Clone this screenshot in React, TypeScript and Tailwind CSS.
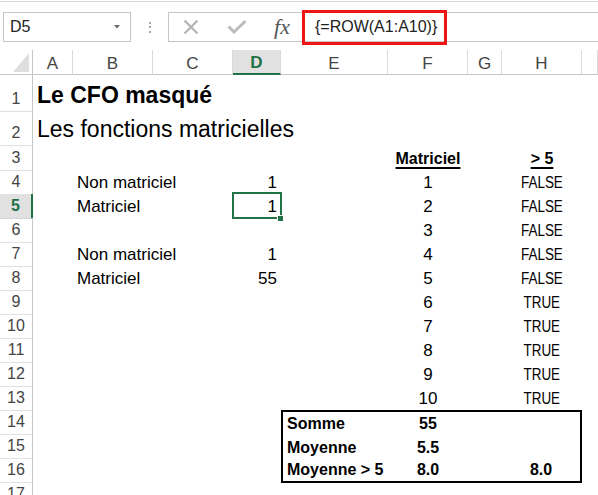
import React from 'react'

type Kind = 'title' | 'subtitle' | 'text' | 'bool' | 'head' | 'sum'

type Cell = {
  text: string
  kind?: Kind
  align?: 'left' | 'center' | 'right'
  edge?: string
}

type SheetRow = {
  n: number
  height: string
  cells: Record<string, Cell>
}

const LETTERS = ['A', 'B', 'C', 'D', 'E', 'F', 'G', 'H', 'I']
const GRID = 'grid grid-cols-[33px_40px_80px_80px_48px_107px_80px_34px_80px_1fr]'

const KIND_CLASS: Record<Kind, string> = {
  title: 'text-[23px] font-bold leading-[28px] pb-[3px]',
  subtitle: 'text-[23px] leading-[28px] pb-[3px]',
  text: 'text-[17px] leading-[24px]',
  // Calibri caps are narrow: squeeze Liberation Sans a little
  bool: 'inline-block origin-center scale-x-[0.84] text-[16px] leading-[24px]',
  head: 'text-[16px] font-bold leading-[24px] underline decoration-[1.5px] underline-offset-[3px]',
  sum: 'text-[16px] font-bold leading-[22px]',
}

const ALIGN_CLASS = {
  left: 'justify-start pl-[4px]',
  center: 'justify-center',
  right: 'justify-end pr-[4px]',
}

const bool = (v: boolean): Cell => ({ text: v ? 'TRUE' : 'FALSE', kind: 'bool', align: 'center' })
const num = (v: number): Cell => ({ text: String(v), align: 'center' })

const sheet: SheetRow[] = [
  { n: 1, height: 'h-[37px]', cells: { A: { text: 'Le CFO masqué', kind: 'title' } } },
  { n: 2, height: 'h-[34px]', cells: { A: { text: 'Les fonctions matricielles', kind: 'subtitle' } } },
  {
    n: 3,
    height: 'h-[24px]',
    cells: {
      F: { text: 'Matriciel', kind: 'head', align: 'center' },
      H: { text: '> 5', kind: 'head', align: 'center' },
    },
  },
  { n: 4, height: 'h-[24px]', cells: { B: { text: 'Non matriciel' }, D: { text: '1', align: 'right' }, F: num(1), H: bool(false) } },
  { n: 5, height: 'h-[24px]', cells: { B: { text: 'Matriciel' }, D: { text: '1', align: 'right' }, F: num(2), H: bool(false) } },
  { n: 6, height: 'h-[24px]', cells: { F: num(3), H: bool(false) } },
  { n: 7, height: 'h-[24px]', cells: { B: { text: 'Non matriciel' }, D: { text: '1', align: 'right' }, F: num(4), H: bool(false) } },
  { n: 8, height: 'h-[24px]', cells: { B: { text: 'Matriciel' }, D: { text: '55', align: 'right' }, F: num(5), H: bool(false) } },
  { n: 9, height: 'h-[24px]', cells: { F: num(6), H: bool(true) } },
  { n: 10, height: 'h-[24px]', cells: { F: num(7), H: bool(true) } },
  { n: 11, height: 'h-[24px]', cells: { F: num(8), H: bool(true) } },
  { n: 12, height: 'h-[24px]', cells: { F: num(9), H: bool(true) } },
  { n: 13, height: 'h-[24px]', cells: { F: num(10), H: bool(true) } },
  {
    n: 14,
    height: 'h-[24px]',
    cells: {
      E: { text: 'Somme', kind: 'sum', align: 'left', edge: 'border-l-2 border-t-2 border-black' },
      F: { text: '55', kind: 'sum', align: 'center', edge: 'border-t-2 border-black' },
      G: { text: '', edge: 'border-t-2 border-black' },
      H: { text: '', edge: 'border-t-2 border-r-2 border-black' },
    },
  },
  {
    n: 15,
    height: 'h-[24px]',
    cells: {
      E: { text: 'Moyenne', kind: 'sum', align: 'left', edge: 'border-l-2 border-black' },
      F: { text: '5.5', kind: 'sum', align: 'center' },
      H: { text: '', edge: 'border-r-2 border-black' },
    },
  },
  {
    n: 16,
    height: 'h-[24px]',
    cells: {
      E: { text: 'Moyenne > 5', kind: 'sum', align: 'left', edge: 'border-l-2 border-b-2 border-black' },
      F: { text: '8.0', kind: 'sum', align: 'center', edge: 'border-b-2 border-black' },
      G: { text: '', edge: 'border-b-2 border-black' },
      H: { text: '8.0', kind: 'sum', align: 'center', edge: 'border-b-2 border-r-2 border-black' },
    },
  },
  { n: 17, height: 'h-[24px]', cells: {} },
]

function FormulaBar() {
  return (
    <div className="mt-px flex h-[49px] items-start border-t border-[#d5d5d5] pt-[10px]">
      <div className="ml-[3px] flex h-[30px] w-[128px] items-center justify-between border border-[#c6c6c6] pl-[6px] pr-[10px]">
        <span className="text-[16px] text-[#222]">D5</span>
        <svg width="6" height="4" viewBox="0 0 6 4">
          <path d="M0 0h6L3 3.5z" fill="#6a6a6a" />
        </svg>
      </div>
      <div className="flex h-[30px] w-[37px] flex-col items-center justify-center gap-[2.5px]">
        <span className="size-[2px] bg-[#a8a8a8]" />
        <span className="size-[2px] bg-[#a8a8a8]" />
        <span className="size-[2px] bg-[#a8a8a8]" />
      </div>
      <div className="flex h-[30px] flex-1 items-center border border-r-0 border-[#c6c6c6]">
        <div className="flex w-[44px] justify-center">
          <svg width="16" height="16" viewBox="0 0 16 16">
            <path d="M1.5 1.5L14.5 14.5M14.5 1.5L1.5 14.5" stroke="#b4b4b4" strokeWidth="2.2" />
          </svg>
        </div>
        <div className="flex w-[47px] justify-center">
          <svg width="20" height="16" viewBox="0 0 20 16">
            <path d="M1.5 7.5L7 13L18.5 2" stroke="#bcbcbc" strokeWidth="3" fill="none" />
          </svg>
        </div>
        <div className="flex w-[44px] justify-center">
          <span className="font-['Liberation_Serif',serif] text-[22px] italic leading-none text-[#555]">fx</span>
        </div>
        <div className="-ml-[2px] flex h-[35px] w-[145px] items-center border-[3px] border-[#ee1515] pl-[10px]">
          <span className="text-[16px] text-[#222]">{'{=ROW(A1:A10)}'}</span>
        </div>
      </div>
    </div>
  )
}

function ColumnHeaders() {
  return (
    <div className={`${GRID} h-[25px]`}>
      <div className="flex items-end justify-end border-b border-r border-[#c6c6c6] pb-[2px] pr-[3px]">
        <svg width="16" height="19" viewBox="0 0 16 19">
          <path d="M16 0V19H0Z" fill="#dfdfdf" />
        </svg>
      </div>
      {LETTERS.map((l) =>
        l === 'D' ? (
          <div
            key={l}
            className="flex items-end justify-center border-b-2 border-r border-[#217346] border-r-[#dadada] bg-[#e1e1e1] text-[17px] font-bold leading-[20px] text-[#217346]"
          >
            {l}
          </div>
        ) : (
          <div
            key={l}
            className="flex items-end justify-center border-b border-r border-[#c6c6c6] border-r-[#dadada] text-[17px] leading-[20px] text-[#444]"
          >
            {/* column I is wide, its letter falls outside the window */}
            {l === 'I' ? '' : l}
          </div>
        ),
      )}
    </div>
  )
}

function RowHeader({ n }: { n: number }) {
  if (n === 5) {
    return (
      <div className="flex items-end justify-center border-b border-r-2 border-b-[#d4d4d4] border-r-[#217346] bg-[#e1e1e1] text-[16px] font-bold leading-[24px] text-[#217346]">
        {n}
      </div>
    )
  }
  return (
    <div className="flex items-end justify-center border-b border-r border-b-[#e1e1e1] border-r-[#c6c6c6] text-[16px] leading-[24px] text-[#444]">
      {n}
    </div>
  )
}

function SheetCell({ cell, selected }: { cell?: Cell; selected?: boolean }) {
  const kind = cell?.kind ?? 'text'
  const align = cell?.align ?? 'left'
  return (
    <div className={`relative flex items-end whitespace-nowrap text-black ${ALIGN_CLASS[align]} ${cell?.edge ?? ''}`}>
      {cell?.text ? <span className={KIND_CLASS[kind]}>{cell.text}</span> : null}
      {selected && (
        <>
          <span className="absolute -left-px -right-px -top-[2px] bottom-0 border-2 border-[#217346]" />
          <span className="absolute -bottom-[3px] -right-[3px] size-[7px] border border-white bg-[#217346]" />
        </>
      )}
    </div>
  )
}

export default function App() {
  return (
    <div className="h-[495px] w-[598px] overflow-hidden bg-white font-['Liberation_Sans',Arial,sans-serif]">
      <FormulaBar />
      <ColumnHeaders />
      {sheet.map((row) => (
        <div key={row.n} className={`${GRID} ${row.height}`}>
          <RowHeader n={row.n} />
          {LETTERS.map((l) => (
            <SheetCell key={l} cell={row.cells[l]} selected={row.n === 5 && l === 'D'} />
          ))}
        </div>
      ))}
    </div>
  )
}
